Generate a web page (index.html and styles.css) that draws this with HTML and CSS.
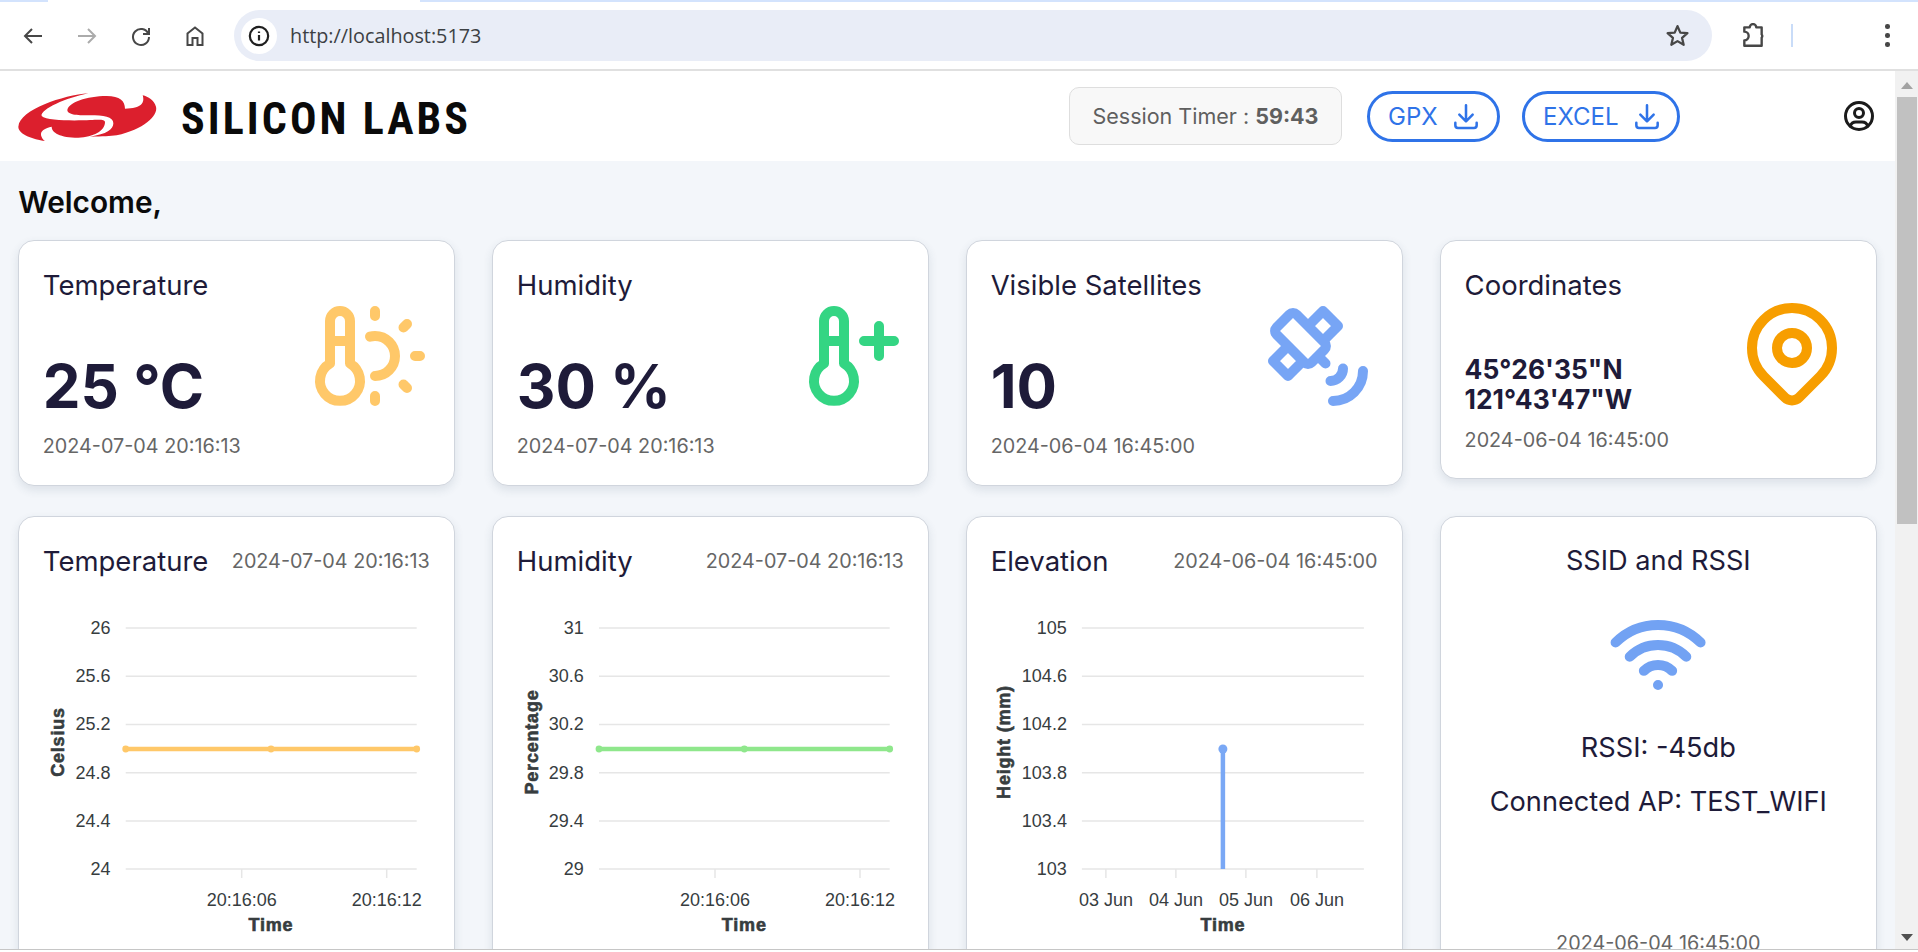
FILE: index.html
```html
<!DOCTYPE html>
<html lang="en">
<head>
<meta charset="utf-8">
<title>Silicon Labs Dashboard</title>
<link rel="stylesheet" href="styles.css">
</head>
<body>
<div class="tabstrip"><div class="tabstrip-tab"></div></div>
<div class="toolbar">
  <button class="nav"><svg class="chrome-icon" viewBox="0 0 24 24"><path d="M21 12H4M11 5l-7 7 7 7"/></svg></button>
  <button class="nav nav-off"><svg class="chrome-icon" viewBox="0 0 24 24"><path d="M3 12h17M13 5l7 7-7 7"/></svg></button>
  <button class="nav"><svg class="chrome-icon" viewBox="0 0 24 24"><path d="M19.2 9.5A8 8 0 1 0 20 13M20 4v6h-6"/></svg></button>
  <button class="nav"><svg class="chrome-icon" viewBox="0 0 24 24"><path d="M4.5 21V9.5L12 3.5l7.5 6V21h-5v-7h-5v7z"/></svg></button>
  <div class="omnibox">
    <span class="site-info"><svg class="info-icon" viewBox="0 0 24 24"><circle cx="12" cy="12" r="10"/><path d="M12 11v6M12 7v1.6"/></svg></span>
    <span class="url">http://localhost:5173</span>
    <svg class="star-icon" viewBox="0 0 24 24"><path d="M12 3l2.7 6.2 6.8.6-5.1 4.5 1.5 6.6L12 17.4l-5.9 3.5 1.5-6.6-5.1-4.5 6.8-.6z"/></svg>
  </div>
  <svg class="ext-icon" viewBox="0 0 24 24"><path d="M4 4h5a3 3 0 0 1 6 0h5v6.500a2.500 2.500 0 0 1 0 3V21H4v-5a4 4 0 0 0 0-8z"/></svg>
  <span class="toolbar-sep"></span>
  <span class="menu-dots"><i></i><i></i><i></i></span>
</div>

<div class="frame">
  <div class="app">
    <header class="app-header">
      <svg class="logo" viewBox="0 0 1410 195" role="img" aria-label="Silicon Labs">
        <path class="logo-red" d="M235 22C160 28 30 70 25 122C25 145 70 160 105 165C88 150 85 130 125 122C125 140 150 155 205 155C250 153 285 135 285 108C285 100 270 100 240 102C200 104 110 105 95 90C90 70 170 35 235 22Z"/>
        <path class="logo-red" d="M320 148C400 130 445 90 438 62C432 42 415 32 398 28C405 50 395 68 345 68C345 45 330 30 290 30C230 30 175 50 172 72C172 88 210 88 240 88C280 88 310 92 310 112C310 130 290 145 240 152C280 152 300 150 320 148Z"/>
        <text class="logo-text" x="513" y="144" textLength="861" lengthAdjust="spacing">SILICON LABS</text>
      </svg>
      <div class="session">Session Timer : <b>59:43</b></div>
      <a class="dl dl-gpx">GPX <svg class="dl-icon" viewBox="0 0 24 24"><path d="M4 17v2a2 2 0 0 0 2 2h12a2 2 0 0 0 2-2v-2M7 11l5 5 5-5M12 4v12"/></svg></a>
      <a class="dl dl-excel">EXCEL <svg class="dl-icon" viewBox="0 0 24 24"><path d="M4 17v2a2 2 0 0 0 2 2h12a2 2 0 0 0 2-2v-2M7 11l5 5 5-5M12 4v12"/></svg></a>
      <svg class="user-icon" viewBox="0 0 24 24"><circle cx="12" cy="12" r="9"/><circle cx="12" cy="10" r="3"/><path d="M6.168 18.849A4 4 0 0 1 10 16h4a4 4 0 0 1 3.834 2.855"/></svg>
    </header>

    <main class="content">
      <h1 class="welcome">Welcome,</h1>
      <section class="stats">
        <article class="card stat">
          <div class="stat-text">
            <h2 class="card-title">Temperature</h2>
            <p class="stat-value">25 °C</p>
            <p class="stamp">2024-07-04 20:16:13</p>
          </div>
          <svg class="stat-icon icon-temp" viewBox="0 0 24 24"><path d="M4 13.500a4 4 0 1 0 4 0v-8.500a2 2 0 1 0-4 0v8.500M4 9h4M13 16a4 4 0 1 0 0-8 4.070 4.070 0 0 0-1 .124M13 3v1M21 12h1M13 20v1M19.400 5.600l-.7.7M18.700 17.700l.7.7"/></svg>
        </article>
        <article class="card stat">
          <div class="stat-text">
            <h2 class="card-title">Humidity</h2>
            <p class="stat-value">30 %</p>
            <p class="stamp">2024-07-04 20:16:13</p>
          </div>
          <svg class="stat-icon icon-hum" viewBox="0 0 24 24"><path d="M8 13.500a4 4 0 1 0 4 0v-8.500a2 2 0 0 0-4 0v8.500M8 9h4M16 9h6M19 6v6"/></svg>
        </article>
        <article class="card stat">
          <div class="stat-text">
            <h2 class="card-title">Visible Satellites</h2>
            <p class="stat-value">10</p>
            <p class="stamp">2024-06-04 16:45:00</p>
          </div>
          <svg class="stat-icon icon-sat" viewBox="0 0 24 24"><path d="M3.707 6.293l2.586-2.586a1 1 0 0 1 1.414 0l5.586 5.586a1 1 0 0 1 0 1.414l-2.586 2.586a1 1 0 0 1-1.414 0L3.707 7.707a1 1 0 0 1 0-1.414zM6 10l-3 3 3 3 3-3M10 6l3-3 3 3-3 3M12 12l1.500 1.500M14.500 17a2.500 2.500 0 0 0 2.500-2.500M15 21a6 6 0 0 0 6-6"/></svg>
        </article>
        <article class="card stat stat-coords">
          <div class="stat-text">
            <h2 class="card-title">Coordinates</h2>
            <p class="coords">45°26'35"N<br>121°43'47"W</p>
            <p class="stamp">2024-06-04 16:45:00</p>
          </div>
          <svg class="stat-icon icon-pin" viewBox="0 0 24 24"><path d="M9 11a3 3 0 1 0 6 0 3 3 0 0 0-6 0M17.657 16.657l-4.243 4.243a2 2 0 0 1-2.827 0l-4.244-4.243a8 8 0 1 1 11.314 0z"/></svg>
        </article>
      </section>

      <section class="charts">
        <article class="card chart-card">
          <div class="chart-head"><h2 class="card-title">Temperature</h2><span class="stamp">2024-07-04 20:16:13</span></div>
          <svg class="chart" viewBox="0 0 434 360">
            <g class="grid"><path d="M106.700 28h291M106.700 76.300h291M106.700 124.500h291M106.700 172.700h291M106.700 221h291M106.700 269h291M222.700 269v9M367.700 269v9"/></g>
            <g class="ylabels"><text x="91.500" y="34">26</text><text x="91.500" y="82">25.6</text><text x="91.500" y="130">25.2</text><text x="91.500" y="179">24.8</text><text x="91.500" y="227">24.4</text><text x="91.500" y="275">24</text></g>
            <g class="xlabels"><text x="222.700" y="306">20:16:06</text><text x="367.700" y="306">20:16:12</text></g>
            <text class="axis-title" x="252" y="331">Time</text>
            <text class="axis-title" transform="translate(45 142) rotate(-90)">Celsius</text>
            <path class="series series-orange" d="M106.700 149h291"/>
            <g class="dots-orange"><circle cx="106.700" cy="149" r="3.400"/><circle cx="252" cy="149" r="3.400"/><circle cx="397.700" cy="149" r="3.400"/></g>
          </svg>
        </article>
        <article class="card chart-card">
          <div class="chart-head"><h2 class="card-title">Humidity</h2><span class="stamp">2024-07-04 20:16:13</span></div>
          <svg class="chart" viewBox="0 0 434 360">
            <g class="grid"><path d="M106 28h290.700M106 76.300h290.700M106 124.500h290.700M106 172.700h290.700M106 221h290.700M106 269h290.700M222 269v9M367 269v9"/></g>
            <g class="ylabels"><text x="90.700" y="34">31</text><text x="90.700" y="82">30.6</text><text x="90.700" y="130">30.2</text><text x="90.700" y="179">29.8</text><text x="90.700" y="227">29.4</text><text x="90.700" y="275">29</text></g>
            <g class="xlabels"><text x="222" y="306">20:16:06</text><text x="367" y="306">20:16:12</text></g>
            <text class="axis-title" x="251.300" y="331">Time</text>
            <text class="axis-title" transform="translate(44.500 142) rotate(-90)">Percentage</text>
            <path class="series series-green" d="M106 149h290.700"/>
            <g class="dots-green"><circle cx="106" cy="149" r="3.400"/><circle cx="251.300" cy="149" r="3.400"/><circle cx="396.700" cy="149" r="3.400"/></g>
          </svg>
        </article>
        <article class="card chart-card">
          <div class="chart-head"><h2 class="card-title">Elevation</h2><span class="stamp">2024-06-04 16:45:00</span></div>
          <svg class="chart" viewBox="0 0 434 360">
            <g class="grid"><path d="M114.900 28h282M114.900 76.300h282M114.900 124.500h282M114.900 172.700h282M114.900 221h282M114.900 269h282M138.900 269v9M208.900 269v9M278.900 269v9M349.900 269v9"/></g>
            <g class="ylabels"><text x="99.900" y="34">105</text><text x="99.900" y="82">104.6</text><text x="99.900" y="130">104.2</text><text x="99.900" y="179">103.8</text><text x="99.900" y="227">103.4</text><text x="99.900" y="275">103</text></g>
            <g class="xlabels"><text x="138.900" y="306">03 Jun</text><text x="208.900" y="306">04 Jun</text><text x="278.900" y="306">05 Jun</text><text x="349.900" y="306">06 Jun</text></g>
            <text class="axis-title" x="255.900" y="331">Time</text>
            <text class="axis-title" transform="translate(43 142) rotate(-90)">Height (mm)</text>
            <path class="series series-blue" d="M255.900 149v120"/>
            <circle class="dots-blue" cx="255.900" cy="149" r="4.500"/>
          </svg>
        </article>
        <article class="card wifi-card">
          <h2 class="card-title wifi-title">SSID and RSSI</h2>
          <svg class="wifi-icon" viewBox="0 0 24 24"><path d="M12 18h.01M9.172 15.172a4 4 0 0 1 5.656 0M6.343 12.343a8 8 0 0 1 11.314 0M3.515 9.515c4.686-4.687 12.284-4.687 17 0"/></svg>
          <p class="wifi-line">RSSI: -45db</p>
          <p class="wifi-line">Connected AP: TEST_WIFI</p>
          <p class="stamp wifi-stamp">2024-06-04 16:45:00</p>
        </article>
      </section>
    </main>
  </div>
  <aside class="scrollbar">
    <span class="arrow-up"></span>
    <span class="thumb"></span>
    <span class="arrow-down"></span>
  </aside>
</div>
<div class="window-edge"></div>
</body>
</html>
```

FILE: styles.css
```css
* { box-sizing: border-box; }
html, body { height: 100%; margin: 0; }
body {
  display: flex;
  flex-direction: column;
  overflow: hidden;
  background: #fff;
  font-family: Inter, "Liberation Sans", sans-serif;
  color: #1e1b39;
}
h1, h2, p { margin: 0; font-weight: 400; }

/* browser chrome */
.tabstrip { height: 2px; background: #d3e3fd; flex: none; }
.tabstrip-tab { width: 372px; height: 2px; margin-left: 48px; background: #fff; }
.toolbar {
  flex: none;
  height: 69px;
  display: flex;
  align-items: center;
  padding: 0 0 0 6px;
  border-bottom: 2px solid #e0e0e0;
  background: #fff;
}
.nav {
  width: 54px;
  height: 36px;
  padding: 0;
  border: 0;
  background: none;
  display: flex;
  align-items: center;
  justify-content: center;
}
.chrome-icon { width: 24px; height: 24px; fill: none; stroke: #474747; stroke-width: 2; }
.nav-off .chrome-icon { stroke: #ababab; }
.omnibox {
  width: 1478px;
  height: 51px;
  margin-left: 12px;
  padding: 0 22px 0 7px;
  display: flex;
  align-items: center;
  border-radius: 26px;
  background: #e9edf7;
}
.site-info {
  width: 36px;
  height: 36px;
  display: flex;
  align-items: center;
  justify-content: center;
  border-radius: 50%;
  background: #fff;
}
.info-icon { width: 22px; height: 22px; fill: none; stroke: #1f1f1f; stroke-width: 2.4; }
.url { margin-left: 13px; font: 19.800px "Open Sans", sans-serif; color: #3c4043; }
.star-icon { width: 25px; height: 25px; margin-left: auto; fill: none; stroke: #474747; stroke-width: 2.2; stroke-linejoin: round; }
.ext-icon { width: 26px; height: 26px; margin-left: 28px; fill: none; stroke: #474747; stroke-width: 2.2; stroke-linejoin: round; }
.toolbar-sep { width: 2px; height: 23px; margin-left: 25px; background: #c9dcf8; }
.menu-dots { margin-left: 92px; display: flex; flex-direction: column; gap: 4.500px; }
.menu-dots i { width: 4.500px; height: 4.500px; border-radius: 50%; background: #474747; }

/* frame */
.frame { flex: 1; min-height: 0; display: flex; }
.app { flex: 1; min-width: 0; display: flex; flex-direction: column; background: #f3f6fa; overflow: hidden; }
.window-edge { flex: none; height: 3px; border-top: 1px solid #c6c6c6; background: #fff; }

.scrollbar {
  flex: none;
  width: 23px;
  display: flex;
  flex-direction: column;
  align-items: center;
  background: #f1f1f1;
  padding: 11px 0 8px;
}
.arrow-up { width: 0; height: 0; border: 6px solid transparent; border-top: 0; border-bottom: 7px solid #a3a3a3; }
.thumb { width: 20px; height: 427px; margin-top: 8px; background: #c1c1c1; margin-left: 1px; }
.arrow-down { width: 0; height: 0; margin-top: auto; border: 6px solid transparent; border-bottom: 0; border-top: 7px solid #505050; }

/* header */
.app-header {
  flex: none;
  height: 90px;
  padding: 0 18px 0 10px;
  display: flex;
  align-items: center;
  background: #fff;
}
.logo { width: 470px; height: 65px; margin-top: 5px; flex: none; }
.logo-red { fill: #dc1f2d; }
.logo-text {
  font-family: "Liberation Sans Narrow", "Roboto Condensed", Roboto, sans-serif;
  font-size: 132px;
  font-weight: 700;
  fill: #0a0a0a;
}
.session {
  width: 273px;
  height: 58px;
  margin-left: auto;
  display: flex;
  align-items: center;
  justify-content: center;
  gap: 6px;
  border: 1px solid #dedede;
  border-radius: 10px;
  background: #f8f8f8;
  font-size: 21.500px;
  color: #5f5f5f;
}
.session b { font-weight: 700; }
.dl {
  height: 51px;
  margin-left: 25px;
  display: flex;
  align-items: center;
  padding-left: 18px;
  border: 3px solid #2f73e8;
  border-radius: 26px;
  font-size: 24px;
  color: #2f73e8;
}
.dl-gpx { width: 133px; gap: 12px; }
.dl-excel { width: 158px; margin-left: 22px; gap: 12px; }
.dl-icon { width: 32px; height: 32px; fill: none; stroke: #2f73e8; stroke-width: 1.900; stroke-linecap: round; stroke-linejoin: round; }
.user-icon { width: 36px; height: 36px; margin-left: 161px; fill: none; stroke: #1b1b1b; stroke-width: 2; stroke-linecap: round; }

/* content */
.content { flex: 1; min-height: 0; padding: 24px 18.500px 0 18.300px; overflow: hidden; }
.welcome { height: 34px; line-height: 34px; font-size: 29.800px; font-weight: 600; color: #0b0b0b; }
.stats, .charts {
  display: grid;
  grid-template-columns: repeat(4, minmax(0, 1fr));
  column-gap: 37.500px;
}
.stats { margin-top: 21px; align-items: start; }
.charts { margin-top: 30px; }
.card {
  border: 1px solid #d0d5dd;
  border-radius: 16px;
  background: #fff;
  box-shadow: 0 4px 10px rgba(52, 70, 100, .12);
}
.card-title { font-size: 27.500px; line-height: 36px; color: #1e1b39; white-space: nowrap; }
.stamp { font-size: 19.800px; line-height: 27px; color: #666; white-space: nowrap; }

.stat {
  height: 246px;
  padding: 26px 24px 25px 23.500px;
  display: flex;
  justify-content: space-between;
  align-items: center;
}
.stat-coords { height: 239px; padding-bottom: 24px; }
.stat-text { align-self: stretch; display: flex; flex-direction: column; }
.stat-value { margin-top: 46px; font-size: 60px; line-height: 75px; font-weight: 700; }
.stat-text .stamp { margin-top: auto; }
.coords { margin-top: auto; font-size: 26.400px; line-height: 30px; font-weight: 700; padding-bottom: 13px; }
.stat-text .coords + .stamp { margin-top: 0; }
.stat-icon {
  width: 120px;
  height: 120px;
  flex: none;
  margin-bottom: 16px;
  fill: none;
  stroke-width: 2;
  stroke-linecap: round;
  stroke-linejoin: round;
}
.icon-temp { stroke: #ffc869; }
.icon-hum { stroke: #34d583; }
.icon-sat { stroke: #77a5f5; }
.icon-pin { stroke: #f79e00; }

.chart-card { height: 450px; }
.chart-head {
  height: 83px;
  padding: 26px 24px 0 23.500px;
  display: flex;
  justify-content: space-between;
  align-items: flex-start;
}
.chart-head .stamp { line-height: 36px; }
.chart { display: block; width: 434px; height: 360px; font-family: "Liberation Sans", Arial, sans-serif; }
.grid path { fill: none; stroke: #e6e6e6; stroke-width: 1.500; }
.ylabels text { text-anchor: end; font-size: 18px; fill: #373d3f; }
.xlabels text { text-anchor: middle; font-size: 18px; fill: #373d3f; }
.axis-title {
  text-anchor: middle;
  font-size: 18px;
  font-weight: 700;
  letter-spacing: .8px;
  fill: #373d3f;
  stroke: #373d3f;
  stroke-width: .6px;
}
.series { fill: none; stroke-width: 4.500; }
.series-orange { stroke: #ffc869; }
.series-green { stroke: #8fe78c; }
.series-blue { stroke: #7aa8f5; }
.dots-orange { fill: #ffc869; }
.dots-green { fill: #8fe78c; }
.dots-blue { fill: #7aa8f5; }

.wifi-card {
  padding-top: 26px;
  display: flex;
  flex-direction: column;
  align-items: center;
  text-align: center;
}
.wifi-title { font-size: 27.200px; }
.wifi-icon {
  width: 120px;
  height: 120px;
  margin-top: 16px;
  flex: none;
  fill: none;
  stroke: #72a2f3;
  stroke-width: 2;
  stroke-linecap: round;
  stroke-linejoin: round;
}
.wifi-line { margin-top: 15px; font-size: 27.200px; line-height: 36px; }
.wifi-line + .wifi-line { margin-top: 18px; }
.wifi-stamp { margin-top: 110px; }
```
